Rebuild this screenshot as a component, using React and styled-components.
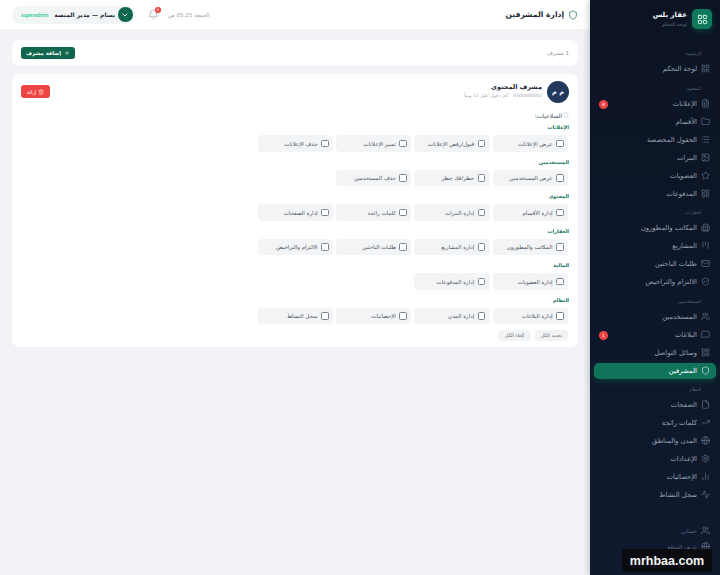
import React from "react";
import styled, { createGlobalStyle } from "styled-components";
import {
  LayoutGrid, FileText, Folder, List, Image, Star, Building2, Kanban, Mail, ShieldCheck,
  Users, MessageSquare, Shield, File, TrendingUp, Globe, Settings, BarChart2, Activity,
  Bell, ChevronDown, Plus, Trash2,
} from "lucide-react";

const GlobalStyle = createGlobalStyle`
  html, body { margin: 0; padding: 0; height: 575px; overflow: hidden; background: #f1f3f6; }
  * { box-sizing: border-box; }
  body { font-family: "DejaVu Sans", "Noto Sans", sans-serif; }
`;

const Page = styled.div`
  display: flex;
  height: 575px;
  width: 720px;
  overflow: hidden;
  position: relative;
`;

/* sidebar */
const Sidebar = styled.aside`
  width: 130px;
  flex-shrink: 0;
  height: 575px;
  background: linear-gradient(180deg, #0c1424 0%, #0f1a2e 100%);
  box-shadow: -2px 0 6px rgba(15, 23, 42, 0.18);
  z-index: 1;
  padding: 9px 4px 0 4px;
  display: flex;
  flex-direction: column;
`;

const Brand = styled.div`
  display: flex;
  align-items: center;
  gap: 5px;
  padding: 0 4px 0 0;
  height: 20px;
  margin-bottom: 18.5px;
`;

const BrandIcon = styled.div`
  width: 20px;
  height: 20px;
  border-radius: 5px;
  background: #10795c;
  color: #d7f5ea;
  display: flex;
  align-items: center;
  justify-content: center;
  box-shadow: 0 2px 6px rgba(16, 121, 92, 0.4);
`;

const BrandName = styled.div`
  font-size: 7px;
  font-weight: 700;
  color: #f4f6f8;
  line-height: 10px;
`;

const BrandSub = styled.div`
  font-size: 5px;
  color: #5d6b80;
  line-height: 8px;
`;

const SectionLabel = styled.div`
  font-size: 4.5px;
  color: #56647a;
  height: 12px;
  line-height: 12px;
  padding-right: 15px;
  margin-top: ${(p) => p.$top}px;
`;

const NavItem = styled.div`
  height: 18px;
  display: flex;
  align-items: center;
  gap: 3.5px;
  padding-right: 5.5px;
  position: relative;
  font-size: 6.8px;
  color: ${(p) => (p.$active ? "#ffffff" : "#98a2b2")};
  font-weight: 400;
  svg { color: ${(p) => (p.$active ? "#ffffff" : "#76849a")}; flex-shrink: 0; }
`;

/* green bar of the current page, a little lower than the row */
const ActiveNavItem = styled(NavItem)`
  &::before {
    content: "";
    position: absolute;
    inset: 1px 0;
    border-radius: 5px;
    background: #11735a;
    box-shadow: 0 2px 7px rgba(17, 115, 90, 0.4);
  }
  > * { position: relative; }
`;

const IconSlot = styled.span`
  width: 10px;
  display: flex;
  justify-content: center;
`;

const NavText = styled.span`
  white-space: nowrap;
`;

const NavBadge = styled.span`
  position: absolute;
  left: 5px;
  top: 5px;
  width: 9px;
  height: 9px;
  border-radius: 50%;
  background: #ef4444;
  color: #fff;
  font-size: 4.5px;
  display: flex;
  align-items: center;
  justify-content: center;
`;

const FootLinks = styled.div`
  margin-top: 19px;
  display: flex;
  flex-direction: column;
`;

const FootItem = styled(NavItem)`
  height: 16px;
  color: #5d6b80;
  font-size: 5.5px;
`;

const Watermark = styled.div`
  position: absolute;
  left: 622px;
  top: 549px;
  width: 90px;
  height: 23px;
  background: #0a0c12;
  color: #f5f5f5;
  font-family: "Liberation Sans", sans-serif;
  font-weight: 700;
  font-size: 12.5px;
  display: flex;
  align-items: center;
  justify-content: center;
  z-index: 2;
`;

/* main column */
const Main = styled.main`
  flex: 1;
  min-width: 0;
  display: flex;
  flex-direction: column;
`;

const Header = styled.header`
  height: 29px;
  background: #ffffff;
  display: flex;
  align-items: center;
  justify-content: space-between;
  padding: 0 12px;
`;

const Title = styled.h1`
  margin: 0;
  display: flex;
  align-items: center;
  gap: 4px;
  font-size: 7.6px;
  font-weight: 700;
  color: #1f2937;
  svg { color: #11735a; }
`;

const HeaderSide = styled.div`
  display: flex;
  align-items: center;
  gap: 9px;
`;

const DateText = styled.span`
  font-size: 5.5px;
  color: #9aa3af;
`;

const BellWrap = styled.span`
  position: relative;
  display: flex;
  color: #8b95a3;
  margin-left: 4px;
`;

const BellBadge = styled.span`
  position: absolute;
  top: -2px;
  left: 7px;
  width: 5.5px;
  height: 5.5px;
  border-radius: 50%;
  background: #ef4444;
  color: #fff;
  font-size: 3.5px;
  display: flex;
  align-items: center;
  justify-content: center;
`;

const UserPill = styled.div`
  width: 123px;
  height: 18px;
  border-radius: 9px;
  background: #f1f5f5;
  display: flex;
  align-items: center;
  gap: 3px;
  padding: 0 2.5px 0 9px;
`;

const UserCircle = styled.span`
  width: 14.5px;
  height: 14.5px;
  border-radius: 50%;
  background: #11664f;
  color: #fff;
  display: flex;
  align-items: center;
  justify-content: center;
`;

const UserName = styled.span`
  font-size: 6px;
  font-weight: 700;
  color: #1f2937;
  flex: 1;
  white-space: nowrap;
`;

const RoleTag = styled.span`
  font-family: "Inter", sans-serif;
  font-size: 4.8px;
  font-weight: 600;
  color: #2ccb94;
  direction: ltr;
`;

const Content = styled.div`
  padding: 11px 12px 0;
  display: flex;
  flex-direction: column;
  gap: 8px;
`;

const Card = styled.section`
  background: #ffffff;
  border-radius: 7px;
  box-shadow: 0 1px 2px rgba(15, 23, 42, 0.02);
`;

const Toolbar = styled(Card)`
  height: 26px;
  padding: 0 9px;
  display: flex;
  align-items: center;
  justify-content: space-between;
`;

const CountText = styled.span`
  font-size: 5.5px;
  color: #8a93a0;
`;

const AddButton = styled.button`
  width: 54px;
  height: 12px;
  border: 0;
  border-radius: 3px;
  background: #11664f;
  color: #fff;
  font: 700 5.2px "DejaVu Sans", sans-serif;
  display: flex;
  align-items: center;
  justify-content: center;
  gap: 3px;
  padding: 0;
`;

const AdminCard = styled(Card)`
  height: 273px;
  padding: 7px 9px 0;
`;

const AdminTop = styled.div`
  display: flex;
  align-items: center;
  justify-content: space-between;
`;

const AdminInfo = styled.div`
  display: flex;
  align-items: center;
  gap: 5px;
`;

const AdminText = styled.div`
  padding-bottom: 2px;
`;

const Avatar = styled.div`
  width: 22px;
  height: 22px;
  border-radius: 50%;
  background: #22395c;
  color: #fff;
  font-size: 6.5px;
  font-weight: 700;
  display: flex;
  align-items: center;
  justify-content: center;
`;

const AdminName = styled.div`
  font-size: 6.5px;
  font-weight: 700;
  color: #1f2937;
  line-height: 9px;
`;

const AdminMeta = styled.div`
  font-size: 4.5px;
  color: #a0a8b3;
  line-height: 7px;
  display: flex;
  gap: 5px;
`;

const DeleteButton = styled.button`
  width: 29px;
  height: 13px;
  border: 0;
  border-radius: 3px;
  background: #ef4444;
  color: #fff;
  font: 500 5px "DejaVu Sans", sans-serif;
  display: flex;
  align-items: center;
  justify-content: center;
  gap: 2px;
  padding: 0;
  align-self: flex-start;
  margin-top: 4px;
`;

const PermsLabel = styled.div`
  margin: 7px 0 3px;
  height: 10px;
  font-size: 6px;
  color: #4b5563;
  display: flex;
  align-items: center;
  gap: 1px;
  svg { color: #9aa3af; }
`;

const GroupTitle = styled.div`
  font-size: 5px;
  font-weight: 700;
  color: #11735a;
  height: 9px;
  line-height: 9px;
`;

const PermGrid = styled.div`
  display: grid;
  grid-template-columns: repeat(4, 75.5px);
  column-gap: 2.8px;
  margin: 3.25px 1px 5.75px 0;
`;

const PermCell = styled.label`
  height: 16.5px;
  background: #f3f4f6;
  border-radius: 4px;
  display: flex;
  align-items: center;
  gap: 3.5px;
  padding-right: 4.5px;
  font-size: 5.5px;
  color: #4b5563;
  white-space: nowrap;
`;

const Check = styled.span`
  width: 7.5px;
  height: 7.5px;
  border: 0.7px solid #7b8491;
  border-radius: 1.5px;
  background: #fff;
  flex-shrink: 0;
`;

const BulkRow = styled.div`
  display: flex;
  gap: 4px;
  margin-right: 1px;
`;

const BulkButton = styled.button`
  width: 33px;
  height: 11px;
  padding: 0;
  border: 0;
  border-radius: 4px;
  background: #f1f3f5;
  color: #6b7280;
  font: 400 4.8px "DejaVu Sans", sans-serif;
`;

const navGroups = [
  { label: "الرئيسية", top: 0, items: [["لوحة التحكم", LayoutGrid]] },
  {
    label: "المحتوى",
    top: 5,
    items: [
      ["الإعلانات", FileText, "4"],
      ["الأقسام", Folder],
      ["الحقول المخصصة", List],
      ["البنرات", Image],
      ["العضويات", Star],
      ["المدفوعات", LayoutGrid],
    ],
  },
  {
    label: "العقارات",
    top: 4,
    items: [
      ["المكاتب والمطورون", Building2],
      ["المشاريع", Kanban],
      ["طلبات الباحثين", Mail],
      ["الالتزام والتراخيص", ShieldCheck],
    ],
  },
  {
    label: "المستخدمين",
    top: 5,
    items: [
      ["المستخدمين", Users],
      ["البلاغات", MessageSquare, "1"],
      ["وسائل التواصل", LayoutGrid],
      ["المشرفين", Shield, null, true],
    ],
  },
  {
    label: "النظام",
    top: 4,
    items: [
      ["الصفحات", File],
      ["كلمات رائجة", TrendingUp],
      ["المدن والمناطق", Globe],
      ["الإعدادات", Settings],
      ["الإحصائيات", BarChart2],
      ["سجل النشاط", Activity],
    ],
  },
];

const permGroups = [
  ["الإعلانات", ["عرض الإعلانات", "قبول/رفض الإعلانات", "تمييز الإعلانات", "حذف الإعلانات"]],
  ["المستخدمين", ["عرض المستخدمين", "حظر/فك حظر", "حذف المستخدمين"]],
  ["المحتوى", ["إدارة الأقسام", "إدارة البنرات", "كلمات رائجة", "إدارة الصفحات"]],
  ["العقارات", ["المكاتب والمطورون", "إدارة المشاريع", "طلبات الباحثين", "الالتزام والتراخيص"]],
  ["المالية", ["إدارة العضويات", "إدارة المدفوعات"]],
  ["النظام", ["إدارة البلاغات", "إدارة المدن", "الإحصائيات", "سجل النشاط"]],
];

export default function App() {
  return (
    <Page dir="rtl">
      <GlobalStyle />
      <Sidebar>
        <Brand>
          <BrandIcon><LayoutGrid size={11} strokeWidth={2} /></BrandIcon>
          <div>
            <BrandName>عقار بلس</BrandName>
            <BrandSub>لوحة التحكم</BrandSub>
          </div>
        </Brand>
        {navGroups.map((group) => (
          <div key={group.label}>
            <SectionLabel $top={group.top}>{group.label}</SectionLabel>
            {group.items.map(([name, Icon, badge, active]) => {
              const Row = active ? ActiveNavItem : NavItem;
              return (
                <Row key={name} $active={active}>
                  <IconSlot><Icon size={9} strokeWidth={1.5} /></IconSlot>
                  <NavText>{name}</NavText>
                  {badge && <NavBadge>{badge}</NavBadge>}
                </Row>
              );
            })}
          </div>
        ))}
        <FootLinks>
          <FootItem><IconSlot><Users size={9} strokeWidth={1.5} /></IconSlot>حسابي</FootItem>
          <FootItem><IconSlot><Globe size={9} strokeWidth={1.5} /></IconSlot>عرض الموقع</FootItem>
        </FootLinks>
      </Sidebar>

      <Main>
        <Header>
          <Title><Shield size={10} strokeWidth={1.8} />إدارة المشرفين</Title>
          <HeaderSide>
            <DateText>الجمعة 05:25 ص</DateText>
            <BellWrap><Bell size={11} strokeWidth={1.4} /><BellBadge>9</BellBadge></BellWrap>
            <UserPill>
              <UserCircle><ChevronDown size={8} strokeWidth={2.5} /></UserCircle>
              <UserName>بسام — مدير المنصة</UserName>
              <RoleTag>superadmin</RoleTag>
            </UserPill>
          </HeaderSide>
        </Header>

        <Content>
          <Toolbar>
            <CountText>1 مشرف</CountText>
            <AddButton><Plus size={6} strokeWidth={2} />إضافة مشرف</AddButton>
          </Toolbar>

          <AdminCard>
            <AdminTop>
              <AdminInfo>
                <Avatar>م م</Avatar>
                <AdminText>
                  <AdminName>مشرف المحتوى</AdminName>
                  <AdminMeta>
                    <span>0500000002</span>
                    <span>آخر دخول: قبل 12 يوماً</span>
                  </AdminMeta>
                </AdminText>
              </AdminInfo>
              <DeleteButton><Trash2 size={6} strokeWidth={1.6} />إزالة</DeleteButton>
            </AdminTop>

            <PermsLabel><Shield size={6} strokeWidth={1.5} />الصلاحيات:</PermsLabel>

            {permGroups.map(([title, perms]) => (
              <div key={title}>
                <GroupTitle>{title}</GroupTitle>
                <PermGrid>
                  {perms.map((perm) => (
                    <PermCell key={perm}><Check />{perm}</PermCell>
                  ))}
                </PermGrid>
              </div>
            ))}

            <BulkRow>
              <BulkButton>تحديد الكل</BulkButton>
              <BulkButton>إلغاء الكل</BulkButton>
            </BulkRow>
          </AdminCard>
        </Content>
      </Main>
      <Watermark>mrhbaa.com</Watermark>
    </Page>
  );
}
